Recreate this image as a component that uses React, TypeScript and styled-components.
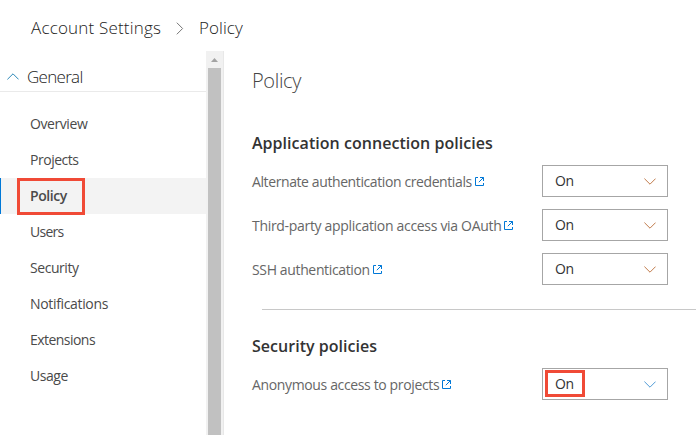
import React from "react";
import styled, { createGlobalStyle } from "styled-components";

const GlobalStyle = createGlobalStyle`
  * { box-sizing: border-box; }
  body { margin: 0; background: #fff; overflow: hidden; }
`;

const Page = styled.div`
  width: 696px;
  height: 435px;
  display: flex;
  flex-direction: column;
  overflow: hidden;
  background: #fff;
  font-family: "Open Sans", "Noto Sans", sans-serif;
  color: #333;
  white-space: nowrap;
`;

const Breadcrumb = styled.header`
  height: 51px;
  flex: none;
  display: flex;
  align-items: center;
  padding: 5px 0 0 31px;
  font-size: 17px;
  font-weight: 350;
  line-height: 24px;
  color: #222;
`;

const Crumb = styled.span<{ $width: number; $spacing: number }>`
  width: ${(p) => p.$width}px;
  letter-spacing: ${(p) => p.$spacing}px;
`;

const CrumbArrow = styled.svg`
  width: 8px;
  height: 13px;
  margin: 0 15px;
`;

const Body = styled.div`
  flex: 1;
  display: flex;
  min-height: 0;
`;

const Sidebar = styled.nav`
  width: 206px;
  flex: none;
`;

const Group = styled.div`
  height: 41px;
  display: flex;
  align-items: center;
  gap: 8px;
  padding: 11px 0 0 7px;
  border-bottom: 1px solid #eaeaea;
  font-size: 17px;
  font-weight: 350;
  line-height: 24px;
  letter-spacing: -0.7px;
  color: #222;
`;

const List = styled.ul`
  list-style: none;
  margin: 0;
  padding: 14px 0 0;
`;

const Item = styled.li<{ $active?: boolean; $spacing: number }>`
  position: relative;
  height: 36px;
  padding-left: 30px;
  font-size: 14px;
  line-height: 36px;
  letter-spacing: ${(p) => p.$spacing}px;
  color: #4a4a4a;
  font-weight: ${(p) => (p.$active ? 600 : 400)};
  background: ${(p) => (p.$active ? "#f3f3f3" : "transparent")};
  ${(p) => p.$active && "box-shadow: inset 1px 0 0 #0078d7;"}
`;

const Highlight = styled.span<{ $x: number; $y: number; $w: number; $h: number }>`
  position: absolute;
  left: ${(p) => p.$x}px;
  top: ${(p) => p.$y}px;
  width: ${(p) => p.$w}px;
  height: ${(p) => p.$h}px;
  border: 3px solid #f04a36;
`;

const Scrollbar = styled.div`
  width: 18px;
  flex: none;
  display: flex;
  flex-direction: column;
  align-items: center;
  background: #f1f1f1;
  border-right: 1px solid #e8e8e8;
`;

const ScrollArrow = styled.svg`
  width: 17px;
  height: 17px;
  flex: none;
`;

const Thumb = styled.div`
  width: 13px;
  flex: 1;
  background: #c1c1c1;
`;

const Main = styled.main`
  flex: 1;
  min-width: 0;
  padding-left: 28px;
`;

const Title = styled.h1`
  margin: 15px 0 0;
  height: 30px;
  font-size: 20px;
  line-height: 30px;
  font-weight: 300;
  letter-spacing: -0.35px;
  color: #444;
`;

const SectionTitle = styled.h2<{ $top: number; $spacing: number }>`
  margin: ${(p) => p.$top}px 0 0;
  height: 24px;
  font-size: 16px;
  line-height: 24px;
  font-weight: 600;
  letter-spacing: ${(p) => p.$spacing}px;
`;

const Rows = styled.div`
  display: grid;
  gap: 12px;
  margin-top: 10px;
`;

const Row = styled.div`
  display: grid;
  grid-template-columns: 290px 126px;
  height: 32px;
`;

const Label = styled.div<{ $spacing: number }>`
  display: flex;
  align-items: center;
  gap: 3px;
  padding-top: 2px;
  font-size: 14px;
  line-height: 20px;
  letter-spacing: ${(p) => p.$spacing}px;
  color: #666;
`;

const Select = styled.div`
  position: relative;
  display: flex;
  align-items: center;
  justify-content: space-between;
  border: 1px solid #a6a6a6;
  padding: 0 11px 0 12px;
  font-size: 14px;
  line-height: 20px;
  letter-spacing: -0.5px;
`;

const Divider = styled.hr`
  margin: 24px 0 0 10px;
  border: 0;
  height: 1px;
  background: #c8c8c8;
`;

const ExternalIcon = styled.svg`
  width: 9px;
  height: 9px;
  margin-bottom: 1px;
`;

const Chevron = ({ color }: { color: string }) => (
  <svg width="12" height="7" viewBox="0 0 12 7" fill="none" stroke={color}>
    <path d="M0.4 0.6 6 6.2 11.6 0.6" />
  </svg>
);

const External = () => (
  <ExternalIcon viewBox="0 0 9 9" fill="none" stroke="#0078d7">
    <path d="M3 0.5H0.5V8.5H8.5V6M5 0.5H8.5V4M8.5 0.5 3.8 5.2" />
  </ExternalIcon>
);

const items: [string, number][] = [
  ["Overview", -0.42],
  ["Projects", -0.48],
  ["Policy", -0.45],
  ["Users", -0.75],
  ["Security", -0.44],
  ["Notifications", -0.34],
  ["Extensions", -0.54],
  ["Usage", -0.45],
];

const policies: [string, number][] = [
  ["Alternate authentication credentials", -0.4],
  ["Third-party application access via OAuth", -0.31],
  ["SSH authentication", -0.36],
];

export default function App() {
  return (
    <Page>
      <GlobalStyle />
      <Breadcrumb>
        <Crumb $width={130} $spacing={0.18}>Account Settings</Crumb>
        <CrumbArrow viewBox="0 0 8 13" fill="none" stroke="#777">
          <path d="M0.8 0.7 6.6 6.5 0.8 12.3" />
        </CrumbArrow>
        <Crumb $width={45} $spacing={0.05}>Policy</Crumb>
      </Breadcrumb>
      <Body>
        <Sidebar>
          <Group>
            <svg width="12" height="7" viewBox="0 0 12 7" fill="none" stroke="#2b88b8">
              <path d="M0.4 6.4 6 0.8 11.6 6.4" />
            </svg>
            General
          </Group>
          <List>
            {items.map(([name, spacing]) => (
              <Item key={name} $spacing={spacing} $active={name === "Policy"}>
                {name}
                {name === "Policy" && <Highlight $x={17} $y={0} $w={68} $h={37} />}
              </Item>
            ))}
          </List>
        </Sidebar>
        <Scrollbar>
          <ScrollArrow viewBox="0 0 17 17">
            <path d="M5 11 8.5 7 12 11Z" fill="#a3a3a3" />
          </ScrollArrow>
          <Thumb />
        </Scrollbar>
        <Main>
          <Title>Policy</Title>
          <SectionTitle $top={35} $spacing={0.04}>Application connection policies</SectionTitle>
          <Rows>
            {policies.map(([name, spacing]) => (
              <Row key={name}>
                <Label $spacing={spacing}>{name}<External /></Label>
                <Select>On<Chevron color="#c07a4a" /></Select>
              </Row>
            ))}
          </Rows>
          <Divider />
          <SectionTitle $top={24} $spacing={0.03}>Security policies</SectionTitle>
          <Rows>
            <Row>
              <Label $spacing={-0.36}>Anonymous access to projects<External /></Label>
              <Select>
                On<Chevron color="#4f9ad6" />
                <Highlight $x={2} $y={1} $w={40} $h={27} />
              </Select>
            </Row>
          </Rows>
        </Main>
      </Body>
    </Page>
  );
}
